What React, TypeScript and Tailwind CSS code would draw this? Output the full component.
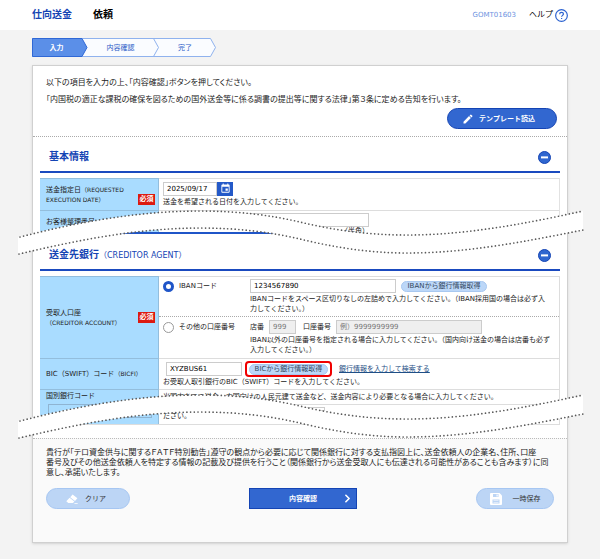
import type { ReactNode } from "react";
import { MdEdit, MdEvent } from "react-icons/md";
import { LuChevronRight } from "react-icons/lu";

interface SectionHeadingProps {
  title: string;
  sub?: string;
}

const SectionHeading = ({ title, sub }: SectionHeadingProps) => (
  <div className="flex h-[36px] items-center justify-between border-b-2 border-[#1a4abf] pt-[6px] pr-[9px] pl-[9px]">
    <h2 className="text-[10px] leading-[12px] font-bold text-[#1444b4]">
      {title}
      {sub && <span className="text-[8px] font-normal">{sub}</span>}
    </h2>
    <button type="button" aria-label="閉じる" className="size-[13px]">
      <svg viewBox="0 0 13 13" className="size-full">
        <circle cx="6.5" cy="6.5" r="6" fill="#2f66cf" stroke="#1444b4" />
        <rect x="3" y="5.4" width="7" height="2" fill="#fff" />
      </svg>
    </button>
  </div>
);

const Required = () => (
  <span className="flex h-[11px] w-[17px] shrink-0 items-center justify-center bg-[#dc1a10] text-[7px] leading-[9px] font-bold text-white">
    必須
  </span>
);

const HeadCell = ({ children }: { children: ReactNode }) => (
  <th
    scope="row"
    className="w-[119px] border-t border-r border-[#93bedd] bg-[#a9dcff] pr-[3px] pl-[6px] text-left font-normal"
  >
    {children}
  </th>
);

// Torn strip that stands for the skipped part of the form
const Wave = () => (
  <svg viewBox="0 0 565 46" preserveAspectRatio="none" className="h-[46px] w-full overflow-visible">
    <path
      d="M0 27C60 12 120 1 182 1C220 1 252 5 282 12C315 20 350 25 389 25C450 25 510 13 565 1V20C510 31 450 43 389 43C350 43 315 37 282 29C252 22 220 18 182 18C120 18 60 30 0 44Z"
      fill="#fff"
    />
    <g fill="none" stroke="#5a5a5a" strokeWidth="1.7" strokeLinecap="round" strokeDasharray="0 3.7">
      <path d="M2 27C60 12 120 1 182 1C220 1 252 5 282 12C315 20 350 25 389 25C450 25 510 13 565 1" />
      <path d="M1 44C60 30 120 18 182 18C220 18 252 22 282 29C315 37 350 43 389 43C450 43 510 31 565 20" />
    </g>
  </svg>
);

const radioClass = "size-[11px] shrink-0 appearance-none rounded-full border border-[#999] bg-white checked:border-[3px] checked:border-[#1f55c8]";
const inputClass = "h-[14px] border border-[#ccc] bg-white px-[3px] text-[7px] leading-[10px] text-black";
const disabledClass = "h-[14px] border border-[#ccc] bg-[#efefef] px-[3px] text-[7px] placeholder:text-[#777]";
const pillClass = "h-[11px] rounded-full border border-[#a8c8f0] bg-[#bcd7f8] text-[7px] leading-[9px] text-[#33475e]";

const App = () => {
  return (
    <div className="min-h-screen bg-[#f3f3f3] pb-4 font-['DejaVu_Sans','Noto_Sans_CJK_JP',sans-serif] text-[7px] leading-[10px] whitespace-nowrap text-[#222]">
      <header className="flex h-[30px] items-center justify-between bg-white px-8">
        <h1 className="flex gap-[21px] text-[10px] leading-[14px] font-bold">
          <span className="text-[#1444b4]">仕向送金</span>
          <span className="text-black">依頼</span>
        </h1>
        <div className="flex items-center gap-[13px]">
          <span className="text-[#6d92e0]">GOMT01603</span>
          <a href="#help" className="flex items-center gap-[2px] text-[8px] text-black">
            ヘルプ
            <svg viewBox="0 0 12 12" className="size-[13px]" fill="none" stroke="#2b62d0">
              <circle cx="6" cy="6" r="5.4" strokeWidth="1.1" />
              <path d="M4.3 4.8C4.3 2.6 7.8 2.7 7.8 4.7C7.8 5.9 6.1 5.9 6.1 7.2M6.1 8.2V9.3" strokeWidth="1.1" />
            </svg>
          </a>
        </div>
      </header>

      <ol className="relative mx-8 mt-2 flex h-[19px] w-[184px] items-center text-center text-[#2a5cc8]">
        <svg viewBox="0 0 184 19" className="absolute inset-0 size-full">
          <path d="M.5 .5H178.500L183.500 9.500L178.500 18.500H.5Z" fill="#fafcff" stroke="#8fb2ee" />
          <path d="M121.500 .5L126.500 9.500L121.500 18.500" fill="none" stroke="#8fb2ee" />
          <path d="M.5 .5H50L55 9.500L50 18.500H.5Z" fill="#5b8fe8" stroke="#2f68d6" />
        </svg>
        <li className="relative w-[49px] font-bold text-white">入力</li>
        <li className="relative w-[79px]">内容確認</li>
        <li className="relative w-[50px]">完了</li>
      </ol>

      <main className="relative mx-8 mt-2 border border-[#d0d0d0] bg-white shadow-sm">
        <section className="border-b border-dotted border-[#aaa] px-[13px] pt-2 pb-[7px] text-[8px] leading-[17px]">
          <p className="[font-feature-settings:'palt']">以下の項目を入力の上、「内容確認」ボタンを押してください。</p>
          <p className="[font-feature-settings:'palt']">
            「内国税の適正な課税の確保を図るための国外送金等に係る調書の提出等に関する法律」第３条に定める告知を行います。
          </p>
          <div className="flex justify-end">
            <button
              type="button"
              className="-mr-[3px] flex h-[21px] w-[110px] items-center justify-center gap-[5px] rounded-full border border-[#1444b4] bg-[#3267d0] pr-[7px] text-[7px] leading-[10px] font-bold text-white"
            >
              <MdEdit className="size-[12px]" />
              テンプレート読込
            </button>
          </div>
        </section>

        <section className="mx-[7px]">
          <SectionHeading title="基本情報" />
          <table className="mt-[5px] w-full table-fixed border-separate border-spacing-0 border-r border-[#e2e2e2]">
            <tbody>
              <tr className="h-[32px]">
                <HeadCell>
                  <div className="flex items-end justify-between">
                    <label htmlFor="date">
                      送金指定日<span className="text-[6px]">（REQUESTED<br />EXECUTION DATE）</span>
                    </label>
                    <Required />
                  </div>
                </HeadCell>
                <td className="border-t border-[#ddd] pl-1">
                  <div className="flex items-center">
                    <input id="date" className={`${inputClass} w-[54px]`} defaultValue="2025/09/17" />
                    <button type="button" aria-label="カレンダー" className="flex h-[14px] w-[16px] items-center justify-center bg-[#2459c8] text-white">
                      <MdEvent className="size-[11px]" />
                    </button>
                  </div>
                  <p className="leading-[12px]">送金を希望される日付を入力してください。</p>
                </td>
              </tr>
              <tr className="h-[22px]">
                <HeadCell>
                  <label htmlFor="customer-no">お客様整理番号</label>
                </HeadCell>
                <td className="border-t border-[#ddd] pt-[2px] pl-1 align-top">
                  <input id="customer-no" className={`${inputClass} block w-[206px]`} />
                  <p className="h-[5px] w-[206px] text-right leading-[8px]">（半角）</p>
                </td>
              </tr>
            </tbody>
          </table>
          <div className="mb-px h-[2px] w-[240px] bg-[#1f55c8]" />
        </section>

        <section className="mx-[7px] mb-[13px]">
          <SectionHeading title="送金先銀行" sub="（CREDITOR AGENT）" />
          <table className="mt-[5px] w-full table-fixed border-separate border-spacing-0 border-r border-b border-[#ddd]">
            <tbody>
              <tr className="h-[82px]">
                <HeadCell>
                  <div className="flex items-center justify-between">
                    <span>
                      受取人口座
                      <br />
                      <span className="text-[6px]">（CREDITOR ACCOUNT）</span>
                    </span>
                    <Required />
                  </div>
                </HeadCell>
                <td className="border-t border-[#ddd]">
                  <div className="flex h-[40px] border-b border-dotted border-[#aaa] pt-[2px] pl-1">
                    <label className="flex h-[14px] w-[87px] items-center gap-[5px]">
                      <input type="radio" name="account" defaultChecked className={radioClass} />
                      IBANコード
                    </label>
                    <div>
                      <div className="flex items-center gap-[5px]">
                        <input aria-label="IBANコード" className={`${inputClass} w-[146px]`} defaultValue="1234567890" />
                        <button type="button" className={`${pillClass} w-[86px]`}>IBANから銀行情報取得</button>
                      </div>
                      <p className="pt-px">
                        IBANコードをスペース区切りなしの左詰めで入力してください。（IBAN採用国の場合は必ず入
                        <br />
                        力してください。）
                      </p>
                    </div>
                  </div>
                  <div className="flex h-[41px] pt-[3px] pl-1">
                    <label className="flex h-[14px] w-[87px] items-center gap-[5px]">
                      <input type="radio" name="account" className={radioClass} />
                      その他の口座番号
                    </label>
                    <div>
                      <div className="flex items-center gap-[5px]">
                        <label htmlFor="branch">店番</label>
                        <input id="branch" disabled className={`${disabledClass} w-[27px]`} placeholder="999" />
                        <label htmlFor="account-no" className="pl-[2px]">口座番号</label>
                        <input id="account-no" disabled className={`${disabledClass} w-[146px]`} placeholder="例）9999999999" />
                      </div>
                      <p className="pt-px">
                        IBAN以外の口座番号を指定される場合に入力してください。（国内向け送金の場合は店番も必ず
                        <br />
                        入力してください。）
                      </p>
                    </div>
                  </div>
                </td>
              </tr>
              <tr className="h-[31px]">
                <HeadCell>
                  <label htmlFor="bic">
                    BIC（SWIFT）コード<span className="text-[6px]">（BICFI）</span>
                  </label>
                </HeadCell>
                <td className="border-t border-[#ddd] pl-1">
                  <div className="flex items-center pl-[3px]">
                    <input id="bic" className={`${inputClass} w-[76px]`} defaultValue="XYZBUS61" />
                    <div className="ml-[3px] flex h-[16px] items-center rounded-[4px] border-2 border-[#f00000] px-[2px]">
                      <button type="button" className={`${pillClass} w-[79px]`}>BICから銀行情報取得</button>
                    </div>
                    <a href="#search" className="ml-[7px] text-[#1f4f86] underline">銀行情報を入力して検索する</a>
                  </div>
                  <p>お受取人取引銀行のBIC（SWIFT）コードを入力してください。</p>
                </td>
              </tr>
              <tr className="h-[35px]">
                <HeadCell>
                  <label htmlFor="national-code" className="block">国別銀行コード</label>
                  <select id="national-code" className="mt-[3px] mb-[5px] ml-[2px] block h-[14px] w-[104px] appearance-none border border-[#8fb4d2]" />
                </HeadCell>
                <td className="border-t border-[#ddd] align-top">
                  <p className="h-[15px] border-b border-[#ddd] pt-[2px] pl-1">
                    米国内あての送金、中国向けの人民元建て送金など、送金内容により必要となる場合に入力してください。
                  </p>
                  <div className="pt-[2px] pl-1">
                    <input aria-label="国別銀行コード" className="block h-[4px] w-[162px] border border-[#ccc]" />
                    <p>ださい。</p>
                  </div>
                </td>
              </tr>
            </tbody>
          </table>
        </section>

        <footer className="border-t border-dotted border-[#bbb] bg-[#fafafa] px-[13px] pt-[9px] pb-[33px]">
          <p className="text-[8px] leading-[10px] [font-feature-settings:'palt']">
            貴行が「テロ資金供与に関するＦＡＴＦ特別勧告」遵守の観点から必要に応じて関係銀行に対する支払指図上に、送金依頼人の企業名、住所、口座
            <br />
            番号及びその他送金依頼人を特定する情報の記載及び提供を行うこと（関係銀行から送金受取人にも伝達される可能性があることも含みます）に同
            <br />
            意し、承諾いたします。
          </p>
          <div className="mt-[10px] flex justify-between">
            <button type="button" className="flex h-[21px] w-[84px] items-center justify-center gap-[7px] rounded-full border border-[#a6c6f2] bg-[#bcd5f5] pr-[4px] text-[#333]">
              <svg viewBox="0 0 12 10" className="h-[10px] w-[12px]" fill="#fff">
                <path d="M6.600 .4L11.400 4.300L9 7L4.200 3.200ZM3.600 3.800L8.400 7.600L7 9H2.300L.3 7.300ZM8.400 9H11.700V9.700H8.400Z" />
              </svg>
              クリア
            </button>
            <button type="button" className="relative flex h-[21px] w-[108px] items-center justify-center border border-[#1444b4] bg-[#3267d0] font-bold text-white">
              内容確認
              <LuChevronRight strokeWidth={3} className="absolute right-[2px] size-[13px]" />
            </button>
            <button type="button" className="flex h-[21px] w-[78px] items-center justify-center gap-[11px] rounded-full border border-[#a6c6f2] bg-[#bcd5f5] text-[#333]">
              <svg viewBox="0 0 12 12" className="size-[12px]">
                <path d="M1 0H9.500L12 2.500V11Q12 12 11 12H1Q0 12 0 11V1Q0 0 1 0Z" fill="#fff" />
                <path d="M3 1H8.500V4H3ZM2.500 6.500H9.500V10.500H2.500Z" fill="#bcd5f5" />
                <path d="M6.500 1.500H7.700V3.500H6.500ZM3.500 7.500H8.500V8.100H3.500ZM3.500 9H8.500V9.600H3.500Z" fill="#fff" />
              </svg>
              一時保存
            </button>
          </div>
        </footer>

        <div className="pointer-events-none absolute top-[144px] -right-[16px] -left-[15px]">
          <Wave />
        </div>
        <div className="pointer-events-none absolute top-[328px] -right-[16px] -left-[15px]">
          <Wave />
        </div>
      </main>
    </div>
  );
};

export default App;
